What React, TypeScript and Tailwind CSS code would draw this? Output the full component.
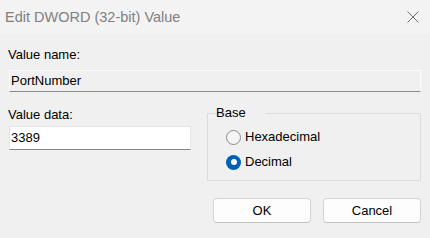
import React from "react";

function Radio({ checked, label }: { checked?: boolean; label: string }) {
  return (
    <div className="flex items-center h-[16px] gap-[4px]">
      {checked ? (
        <span className="w-[15px] h-[15px] rounded-full bg-[#005fb8] flex items-center justify-center">
          <span className="w-[6px] h-[6px] rounded-full bg-white" />
        </span>
      ) : (
        <span className="w-[15px] h-[15px] rounded-full border border-[#8a8a8a] bg-[#f5f5f5]" />
      )}
      <span className="leading-[16px]">{label}</span>
    </div>
  );
}

export default function App() {
  return (
    <div
      className="w-[430px] h-[238px] bg-[#f0f0f0] text-[13px] text-black flex flex-col overflow-hidden"
      style={{ fontFamily: '"Liberation Sans", Arial, sans-serif' }}
    >
      <div className="h-[34px] bg-[#f3f3f3] flex items-center justify-between pl-[5px] pr-[11px] shrink-0">
        <span className="text-[14.5px] text-[#808080] leading-[18px]">Edit DWORD (32-bit) Value</span>
        <svg width="12" height="12" viewBox="0 0 12 12" className="shrink-0">
          <path d="M0.5 0.5 L11.5 11.5 M11.5 0.5 L0.5 11.5" stroke="#6e6e6e" strokeWidth="1" fill="none" />
        </svg>
      </div>
      <div className="flex flex-col pt-[13px] px-[9px]">
        <div className="leading-[16px] h-[16px] -ml-px">Value name:</div>
        <div className="mt-[7px] h-[22px] bg-[#f0f0f0] border border-[#fafafa] border-b-[#8a8a8a] flex items-center pl-[1px]">
          <span className="leading-[16px]">PortNumber</span>
        </div>
        <div className="flex items-start mt-[13px]">
          <div className="w-[182px] flex flex-col pt-[2px]">
            <div className="leading-[16px] h-[16px] -ml-px">Value data:</div>
            <div className="mt-[3px] h-[24px] bg-white border border-[#e3e3e3] border-b-[#868686] flex items-center pl-[1px]">
              <span className="leading-[16px]">3389</span>
            </div>
          </div>
          <fieldset className="ml-[16px] flex-1 h-[76px] border border-[#dcdcdc] pl-[18px]">
            <legend className="ml-[7px] px-[1px] leading-[16px] -translate-x-[18px]">Base</legend>
            <div className="flex flex-col gap-[9px] pt-[8px]">
              <Radio label="Hexadecimal" />
              <Radio checked label="Decimal" />
            </div>
          </fieldset>
        </div>
        <div className="flex justify-end gap-[12px] mt-[17px]">
          <button className="w-[98px] h-[25px] bg-[#fdfdfd] border border-[#d4d4d4] border-b-[#c4c4c4] rounded-[4px] text-[13px] leading-[16px]">
            OK
          </button>
          <button className="w-[98px] h-[25px] bg-[#fdfdfd] border border-[#d4d4d4] border-b-[#c4c4c4] rounded-[4px] text-[13px] leading-[16px]">
            Cancel
          </button>
        </div>
      </div>
    </div>
  );
}
